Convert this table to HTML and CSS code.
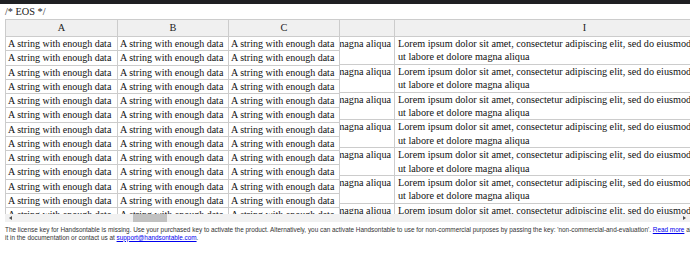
FILE: index.html
```html
<!DOCTYPE html>
<html>
<head>
<meta charset="utf-8">
<link rel="stylesheet" href="styles.css">
</head>
<body>
<div class="topbar"></div>
<div class="page">
  <div class="title">/* EOS */</div>
  <div class="hot">
    <div class="viewport">
      <div class="clone">
        <div class="th first">A</div><div class="th">B</div><div class="th">C</div>
        <div class="td first">A string with enough data</div><div class="td">A string with enough data</div><div class="td">A string with enough data</div>
        <div class="td first">A string with enough data</div><div class="td">A string with enough data</div><div class="td">A string with enough data</div>
        <div class="td first">A string with enough data</div><div class="td">A string with enough data</div><div class="td">A string with enough data</div>
        <div class="td first">A string with enough data</div><div class="td">A string with enough data</div><div class="td">A string with enough data</div>
        <div class="td first">A string with enough data</div><div class="td">A string with enough data</div><div class="td">A string with enough data</div>
        <div class="td first">A string with enough data</div><div class="td">A string with enough data</div><div class="td">A string with enough data</div>
        <div class="td first">A string with enough data</div><div class="td">A string with enough data</div><div class="td">A string with enough data</div>
        <div class="td first">A string with enough data</div><div class="td">A string with enough data</div><div class="td">A string with enough data</div>
        <div class="td first">A string with enough data</div><div class="td">A string with enough data</div><div class="td">A string with enough data</div>
        <div class="td first">A string with enough data</div><div class="td">A string with enough data</div><div class="td">A string with enough data</div>
        <div class="td first">A string with enough data</div><div class="td">A string with enough data</div><div class="td">A string with enough data</div>
        <div class="td first">A string with enough data</div><div class="td">A string with enough data</div><div class="td">A string with enough data</div>
        <div class="td first">A string with enough data</div><div class="td">A string with enough data</div><div class="td">A string with enough data</div>
      </div>
      <div class="main">
        <div class="th"></div><div class="th">I</div>
        <div class="tdw clip"><span>magna aliqua</span></div><div class="tdw long">Lorem ipsum dolor sit amet, consectetur adipiscing elit, sed do eiusmod tempor incididunt<br>ut labore et dolore magna aliqua</div>
        <div class="tdw clip"><span>magna aliqua</span></div><div class="tdw long">Lorem ipsum dolor sit amet, consectetur adipiscing elit, sed do eiusmod tempor incididunt<br>ut labore et dolore magna aliqua</div>
        <div class="tdw clip"><span>magna aliqua</span></div><div class="tdw long">Lorem ipsum dolor sit amet, consectetur adipiscing elit, sed do eiusmod tempor incididunt<br>ut labore et dolore magna aliqua</div>
        <div class="tdw clip"><span>magna aliqua</span></div><div class="tdw long">Lorem ipsum dolor sit amet, consectetur adipiscing elit, sed do eiusmod tempor incididunt<br>ut labore et dolore magna aliqua</div>
        <div class="tdw clip"><span>magna aliqua</span></div><div class="tdw long">Lorem ipsum dolor sit amet, consectetur adipiscing elit, sed do eiusmod tempor incididunt<br>ut labore et dolore magna aliqua</div>
        <div class="tdw clip"><span>magna aliqua</span></div><div class="tdw long">Lorem ipsum dolor sit amet, consectetur adipiscing elit, sed do eiusmod tempor incididunt<br>ut labore et dolore magna aliqua</div>
        <div class="tdw clip"><span>magna aliqua</span></div><div class="tdw long">Lorem ipsum dolor sit amet, consectetur adipiscing elit, sed do eiusmod tempor incididunt<br>ut labore et dolore magna aliqua</div>
      </div>
    </div>
    <div class="hscroll">
      <div class="arrow left"></div>
      <div class="track"><div class="thumb"></div></div>
      <div class="arrow right"></div>
    </div>
  </div>
  <p class="license">The license key for Handsontable is missing. Use your purchased key to activate the product. Alternatively, you can activate Handsontable to use for non-commercial purposes by passing the key: 'non-commercial-and-evaluation'. <a href="#">Read more</a> about<br>it in the documentation or contact us at <a href="#">support@handsontable.com</a>.</p>
</div>
</body>
</html>
```
FILE: styles.css
```css
html, body {
  margin: 0;
  padding: 0;
  background: #fff;
  overflow: hidden;
}
body {
  width: 690px;
  height: 262px;
}
.topbar {
  height: 4px;
  background: #1f2023;
}
.page {
  padding: 0 0 0 5px;
}
.title {
  font-family: "Liberation Serif", serif;
  font-size: 10.3px;
  line-height: 15px;
  color: #222;
}
.hot {
  width: 685px;
}
.viewport {
  display: flex;
  height: 195px;
  overflow: hidden;
  font-family: "Liberation Serif", serif;
  font-size: 10px;
  color: #111;
}
.clone {
  flex: none;
  display: grid;
  grid-template-columns: 113px 111px 111px;
  grid-template-rows: 18px;
  grid-auto-rows: 14.27px;
}
.main {
  flex: none;
  display: grid;
  grid-template-columns: 55px 380px;
  grid-template-rows: 18px;
  grid-auto-rows: 27.8px;
  font-size: 10.2px;
}
.th {
  box-sizing: border-box;
  background: #f0f0f0;
  border-top: 1px solid #ccc;
  border-bottom: 1px solid #ccc;
  border-right: 1px solid #ccc;
  text-align: center;
  line-height: 16px;
  font-size: 10.3px;
  color: #222;
}
.first {
  border-left: 1px solid #ccc;
}
.td {
  box-sizing: border-box;
  border-right: 1px solid #ccc;
  border-bottom: 1px solid #ccc;
  padding: 0 2px;
  line-height: 13.27px;
  white-space: nowrap;
  overflow: hidden;
  background: #fff;
}
.tdw {
  box-sizing: border-box;
  border-right: 1px solid #ccc;
  border-bottom: 1px solid #ccc;
  padding: 0 3px;
  line-height: 13.4px;
  overflow: hidden;
  background: #fff;
}
.long {
  white-space: nowrap;
}
.clip {
  display: flex;
  justify-content: flex-end;
  align-items: flex-start;
  white-space: nowrap;
  padding: 0 3px 0 0;
}
.clip span {
  flex: none;
}
.hscroll {
  display: flex;
  align-items: center;
  height: 8px;
  background: #f1f1f1;
}
.arrow {
  width: 0;
  height: 0;
  border-top: 2.5px solid transparent;
  border-bottom: 2.5px solid transparent;
}
.arrow.left {
  margin-left: 4px;
  border-right: 3px solid #505050;
}
.arrow.right {
  margin-right: 4px;
  border-left: 3px solid #505050;
}
.track {
  flex: 1;
  height: 8px;
  position: relative;
}
.thumb {
  position: absolute;
  left: 121px;
  top: 0;
  width: 34px;
  height: 8px;
  background: #c1c1c1;
}
.license {
  margin: 4px 0 0 0;
  width: 720px;
  font-family: "Liberation Sans", Arial, sans-serif;
  font-size: 6.4px;
  line-height: 7.5px;
  color: #333;
  white-space: nowrap;
}
.license a {
  color: #0000ee;
  text-decoration: underline;
}
```
